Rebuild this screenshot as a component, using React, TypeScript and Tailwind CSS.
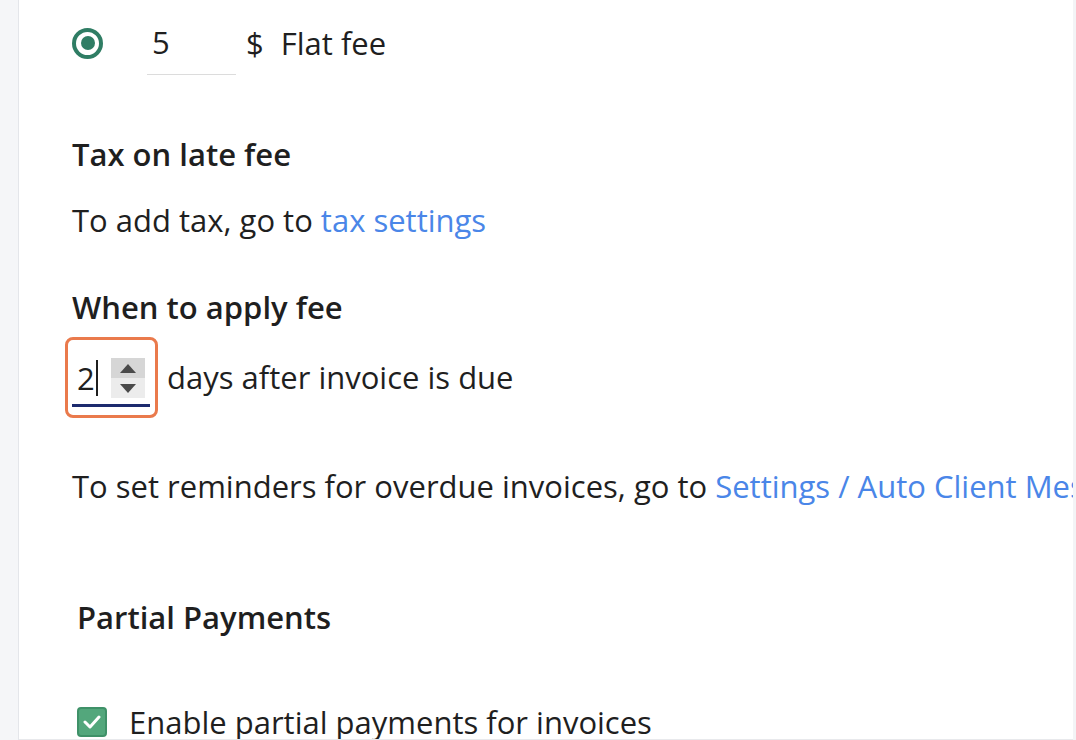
import React from "react";

const Radio = () => (
  <div className="w-[31px] h-[31px] rounded-full border-[4px] border-[#2f7d64] flex items-center justify-center">
    <div className="w-[14px] h-[14px] rounded-full bg-[#2f7d64]" />
  </div>
);

const Spinner = () => (
  <div className="w-[34px] h-[40px] flex flex-col">
    <div className="flex-1 bg-[#d6d6d6] flex items-center justify-center">
      <svg width="16" height="9" viewBox="0 0 16 9">
        <path d="M8 0 L16 9 L0 9 Z" fill="#4a4a4a" />
      </svg>
    </div>
    <div className="flex-1 bg-[#ececec] flex items-center justify-center">
      <svg width="16" height="9" viewBox="0 0 16 9">
        <path d="M0 0 L16 0 L8 9 Z" fill="#4a4a4a" />
      </svg>
    </div>
  </div>
);

export default function App() {
  return (
    <div
      className="w-[1076px] h-[740px] overflow-hidden flex bg-white text-[#1f1f1f]"
      style={{ fontFamily: '"Open Sans", "Noto Sans", sans-serif' }}
    >
      <div className="w-[19px] shrink-0 bg-[#f5f6f8] border-r border-[#e4e6ea]" />
      <div className="flex-1 min-w-0 overflow-hidden border-b border-[#e8e9ec] pl-[53px] text-[31px]">
        <div className="mt-[11px] h-[64px] flex items-center">
          <Radio />
          <div className="ml-[44px] w-[89px] h-[64px] flex items-center pl-[5px] border-b border-[#dcdcdc]">
            5
          </div>
          <span className="ml-[10px]">$</span>
          <span className="ml-[17px]">Flat fee</span>
        </div>

        <div className="mt-[59px] leading-[40px] font-semibold">Tax on late fee</div>
        <div className="mt-[26px] leading-[40px]">
          To add tax, go to <span className="text-[#4a86e8]">tax settings</span>
        </div>

        <div className="mt-[47px] leading-[40px] font-semibold">When to apply fee</div>
        <div className="mt-[10px] flex items-center -ml-[7px]">
          <div className="w-[93px] h-[81px] shrink-0 rounded-[8px] border-[3px] border-[#ea7a4c] pl-[4px] pt-[12px]">
            <div className="w-[78px] h-[55px] border-b-[3px] border-[#1c2a6e] flex items-center">
              <span className="pl-[5px] leading-none">2</span>
              <span className="w-[2px] h-[36px] bg-[#1f1f1f] ml-[1px]" />
              <div className="ml-auto mr-[5px]">
                <Spinner />
              </div>
            </div>
          </div>
          <span className="ml-[9px]">days after invoice is due</span>
        </div>

        <div className="mt-[48px] leading-[40px] whitespace-nowrap">
          To set reminders for overdue invoices, go to{" "}
          <span className="text-[#4a86e8]">Settings / Auto Client Messages</span>
        </div>

        <div className="mt-[91px] ml-[5px] leading-[40px] font-semibold">Partial Payments</div>

        <div className="mt-[65px] ml-[5px] flex items-center leading-[40px]">
          <div className="w-[30px] h-[30px] shrink-0 rounded-[4px] bg-[#53a77c] border-2 border-[#3f9168] flex items-center justify-center">
            <svg width="18" height="14" viewBox="0 0 18 14">
              <path d="M2 7 L7 12 L16 2" stroke="white" strokeWidth="3" fill="none" strokeLinecap="round" strokeLinejoin="round" />
            </svg>
          </div>
          <span className="ml-[22px] whitespace-nowrap">Enable partial payments for invoices</span>
        </div>
      </div>
      <div className="w-[3px] shrink-0 bg-[#f3f4f6]" />
    </div>
  );
}
